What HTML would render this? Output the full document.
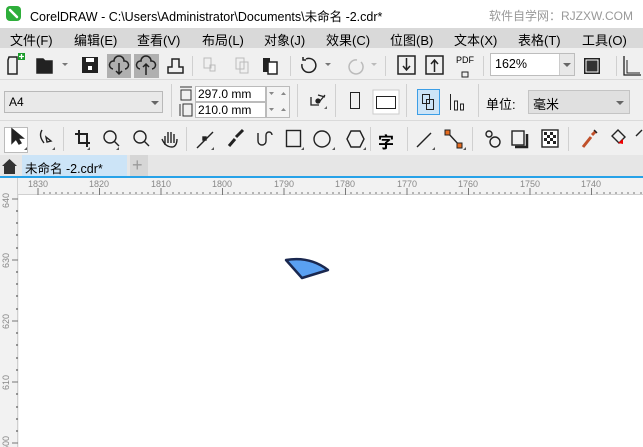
<!DOCTYPE html>
<html><head><meta charset="utf-8"><style>
*{margin:0;padding:0;box-sizing:border-box}
body{width:643px;height:447px;overflow:hidden;background:#f0f0f0;font-family:"Liberation Sans","Noto Sans CJK SC",sans-serif;position:relative}
.a{position:absolute}
.t{font-size:12px;color:#000;white-space:nowrap}
.ic{position:absolute}
svg{position:absolute;overflow:visible}
.sep{position:absolute;width:1px;background:#d0d0d0}
</style></head><body>
<!-- title -->
<div class="a" style="left:0;top:0;width:643px;height:28px;background:#fff"></div>
<div class="a" style="left:6px;top:6px;width:15px;height:15px;border-radius:4px;background:#2eae3a"></div>
<svg style="left:6px;top:6px" width="15" height="15"><path d="M4 4L11 11" stroke="#fff" stroke-width="2.5" stroke-linecap="round"/></svg>
<div class="a t" style="left:30px;top:6px;font-size:12.5px">CorelDRAW - C:\Users\Administrator\Documents\未命名 -2.cdr*</div>
<div class="a t" style="left:489px;top:7px;color:#999;font-size:12px">软件自学网：RJZXW.COM</div>
<!-- menu -->
<div class="a" style="left:0;top:28px;width:643px;height:20px;background:#d9d9d9"></div>
<div class="a t" style="left:10px;top:30px;font-size:13px">文件(F)</div>
<div class="a t" style="left:74px;top:30px;font-size:13px">编辑(E)</div>
<div class="a t" style="left:137px;top:30px;font-size:13px">查看(V)</div>
<div class="a t" style="left:202px;top:30px;font-size:13px">布局(L)</div>
<div class="a t" style="left:264px;top:30px;font-size:13px">对象(J)</div>
<div class="a t" style="left:326px;top:30px;font-size:13px">效果(C)</div>
<div class="a t" style="left:390px;top:30px;font-size:13px">位图(B)</div>
<div class="a t" style="left:454px;top:30px;font-size:13px">文本(X)</div>
<div class="a t" style="left:518px;top:30px;font-size:13px">表格(T)</div>
<div class="a t" style="left:582px;top:30px;font-size:13px">工具(O)</div>
<!-- toolbar1 -->
<div class="a" style="left:0;top:79px;width:643px;height:1px;background:#dadada"></div>
<svg style="left:0;top:48px" width="643" height="32" fill="none" stroke="#222" stroke-width="1.5">
<path d="M9 9h8v17H8V12z"/><rect x="18" y="5" width="7" height="7" fill="#1a9c2a" stroke="none"/><path d="M21.5 6v5M19 8.5h5" stroke="#fff" stroke-width="1.3"/>
<path d="M37 11h6l2 2h7v12H37z" fill="#222"/><path d="M62 15l3 3 3-3z" fill="#777" stroke="none"/>
<rect x="82" y="9" width="16" height="16" fill="#222" stroke="none"/><rect x="86" y="10" width="8" height="4" fill="#fff" stroke="none"/><rect x="88" y="18" width="4" height="4" fill="#fff" stroke="none"/>
<rect x="107" y="6" width="24" height="24" fill="#b0b0b0" stroke="none"/><rect x="134" y="6" width="25" height="24" fill="#b0b0b0" stroke="none"/>
<path d="M113 21a4 4 0 0 1 1-8 5 5 0 0 1 10 0 4 4 0 0 1 1 8M119 15v11M116 23l3 3 3-3"/>
<path d="M140 21a4 4 0 0 1 1-8 5 5 0 0 1 10 0 4 4 0 0 1 1 8M146 27v-11M143 19l3-3 3 3"/>
<path d="M168 25h15v-6h-4v-8h-7v8h-4z"/>
<g stroke="#bbb" stroke-width="1"><rect x="204" y="10" width="7" height="10"/><rect x="210" y="17" width="5" height="6"/><rect x="236" y="10" width="8" height="11"/><rect x="240" y="14" width="8" height="11"/></g>
<rect x="263" y="10" width="7" height="14" fill="#222" stroke="none"/><rect x="268" y="14" width="9" height="12" fill="#fff" stroke="#222"/>
<path d="M302 16a7 7 0 1 0 4-5M303 9v3h3"/><path d="M325 15l3 3 3-3z" fill="#777" stroke="none"/>
<path d="M357 12a7 7 0 1 0 4 2" stroke="#bbb"/><path d="M371 15l3 3 3-3z" fill="#bbb" stroke="none"/>
<rect x="398" y="8" width="17" height="18"/><path d="M406.5 10v12M403 18l3.5 4 3.5-4"/>
<rect x="426" y="8" width="17" height="18"/><path d="M434.5 24v-12M431 16l3.5-4 3.5 4"/>
<rect x="462" y="24" width="6" height="5" stroke-width="1"/>
<rect x="584" y="10" width="16" height="16" fill="#222" stroke="none"/><rect x="586" y="12" width="12" height="12" fill="#333" stroke="#fff" stroke-width="1"/>
<path d="M624 8v19h17" stroke-width="1.3"/><path d="M627 12v13h13" stroke-width="1"/>
</svg>
<div class="a t" style="left:456px;top:55px;font-size:9px">PDF</div>
<div class="sep" style="left:192px;top:56px;height:20px"></div>
<div class="sep" style="left:290px;top:56px;height:20px"></div>
<div class="sep" style="left:385px;top:56px;height:20px"></div>
<div class="sep" style="left:483px;top:56px;height:20px"></div>
<div class="sep" style="left:616px;top:56px;height:20px"></div>
<div class="a" style="left:490px;top:53px;width:85px;height:23px;background:#fff;border:1px solid #bdbdbd"></div>
<div class="a" style="left:559px;top:54px;width:15px;height:21px;background:#e8e8e8;border-left:1px solid #ccc"></div>
<svg style="left:562px;top:62px" width="10" height="6"><path d="M1 1h8L5 5z" fill="#666"/></svg>
<div class="a t" style="left:495px;top:57px;font-size:12.5px">162%</div>
<!-- toolbar2 -->
<div class="a" style="left:0;top:120px;width:643px;height:1px;background:#dadada"></div>
<div class="a" style="left:4px;top:91px;width:159px;height:22px;background:#e9e9e9;border:1px solid #b9b9b9"></div>
<div class="a t" style="left:9px;top:95px">A4</div>
<svg style="left:150px;top:100px" width="10" height="6"><path d="M1 1h8L5 5z" fill="#666"/></svg>
<div class="sep" style="left:171px;top:84px;height:33px"></div>
<svg style="left:178px;top:86px" width="16" height="32" fill="none" stroke="#333"><path d="M2 1h12M3 4h10v10H3zM2 18v12M5 18h9v12H5z"/></svg>
<div class="a" style="left:195px;top:86px;width:71px;height:16px;background:#fff;border:1px solid #bbb"></div>
<div class="a" style="left:195px;top:102px;width:71px;height:16px;background:#fff;border:1px solid #bbb"></div>
<div class="a" style="left:266px;top:86px;width:24px;height:32px;background:#f4f4f4;border:1px solid #bbb"></div>
<div class="a t" style="left:198px;top:87px;font-size:12px">297.0 mm</div>
<div class="a t" style="left:198px;top:103px;font-size:12px">210.0 mm</div>
<svg style="left:268px;top:90px" width="20" height="25" fill="#888"><path d="M1 2h5L3.5 5zM13 5h5l-2.5-3zM1 18h5l-2.5 3zM13 21h5l-2.5-3z"/></svg>
<div class="sep" style="left:297px;top:84px;height:33px"></div>
<svg style="left:308px;top:92px" width="20" height="20" fill="none" stroke="#222" stroke-width="1.3"><path d="M3 5v8h8M10 3l7 2M17 3l-5 6"/><circle cx="10" cy="9" r="2" fill="#222"/><path d="M16 17l3-3v3z" fill="#666" stroke="none"/></svg>
<div class="sep" style="left:335px;top:84px;height:33px"></div>
<svg style="left:345px;top:90px" width="60" height="24" fill="none" stroke="#222"><rect x="5.5" y="2.5" width="9" height="16"/><rect x="28" y="0" width="26" height="24" fill="#fff" stroke="#ccc"/><rect x="31.5" y="6.5" width="19" height="12"/></svg>
<div class="sep" style="left:406px;top:84px;height:33px"></div>
<div class="a" style="left:417px;top:89px;width:23px;height:26px;background:#cce4f7;border:1px solid #3c9ee6"></div>
<svg style="left:420px;top:93px" width="50" height="20" fill="none" stroke="#222"><rect x="2.5" y="1.5" width="7" height="9"/><rect x="6.5" y="6.5" width="7" height="10"/><path d="M30.5 1v16M34.5 8h3v9h-3zM40.5 11h3v6h-3z"/></svg>
<div class="sep" style="left:478px;top:84px;height:33px"></div>
<div class="a t" style="left:486px;top:94px;font-size:13px">单位:</div>
<div class="a" style="left:528px;top:90px;width:102px;height:24px;background:#e0e0e0;border:1px solid #c4c4c4"></div>
<div class="a t" style="left:533px;top:94px;font-size:13px">毫米</div>
<svg style="left:615px;top:100px" width="10" height="6"><path d="M1 1h8L5 5z" fill="#666"/></svg>
<!-- toolbar3 -->
<div class="a" style="left:4px;top:127px;width:24px;height:26px;background:#fff;border:1px solid #bbb"></div>
<svg style="left:0;top:121px" width="643" height="34" fill="none" stroke="#222" stroke-width="1.4">
<path d="M12 8v14l4-4 3 5 2-1-3-5h5z" fill="#222"/><path d="M24 29l3-3v3z" fill="#555" stroke="none"/>
<path d="M42 9c-3 5-1 9 2 13M46 16l5 4-4 1z" fill="none"/><path d="M52 29l3-3v3z" fill="#555" stroke="none"/>
<g stroke-width="2"><path d="M79 9v13h11M75 13h12v13"/></g><path d="M87 29l3-3v3z" fill="#555" stroke="none"/>
<circle cx="110" cy="16" r="6"/><path d="M114 20l5 5"/><path d="M116 29l3-3v3z" fill="#555" stroke="none"/>
<circle cx="140" cy="16" r="6"/><path d="M144 20l5 5"/>
<path d="M165 24v-9M168 22v-11M171 22v-11M174 22v-9M162 18c2 5 5 8 10 8 3 0 5-3 5-8"/>
<path d="M197 27l16-16"/><rect x="203" y="16" width="3" height="3" fill="#222"/><path d="M211 29l3-3v3z" fill="#555" stroke="none"/>
<path d="M229 25l6-7M236 16l7-7" stroke-width="3"/>
<path d="M258 12v8a4 4 0 0 0 8 0v-6a3 3 0 0 1 6 0"/>
<rect x="286.5" y="9.5" width="14" height="16"/><path d="M301 29l3-3v3z" fill="#555" stroke="none"/>
<circle cx="322" cy="18" r="8"/><path d="M332 29l3-3v3z" fill="#555" stroke="none"/>
<path d="M347 18l4-8h9l4 8-4 8h-9z"/><path d="M363 29l3-3v3z" fill="#555" stroke="none"/>
<path d="M417 26l14-14"/><path d="M432 29l3-3v3z" fill="#555" stroke="none"/>
<path d="M448 12l12 13"/><rect x="445" y="9" width="5" height="5" fill="#e56b1f" stroke="#222" stroke-width="1"/><rect x="457" y="22" width="5" height="5" fill="#e56b1f" stroke="#222" stroke-width="1"/><path d="M463 29l3-3v3z" fill="#555" stroke="none"/>
<circle cx="489" cy="13" r="3"/><circle cx="495" cy="21" r="5"/>
<rect x="512" y="10" width="12" height="14"/><path d="M515 26h12V13" stroke-width="2.5"/>
<rect x="542" y="9" width="16" height="17" fill="#fff"/><path d="M544 11h3v3h-3zM550 11h3v3h-3zM547 14h3v3h-3zM553 14h3v3h-3zM544 17h3v3h-3zM550 17h3v3h-3zM547 20h3v3h-3zM553 20h3v3h-3z" fill="#222" stroke="none"/>
<path d="M583 26l8-10M592 14l4-4" stroke-width="3" stroke="#c0502a"/><path d="M594 9l3 3" stroke="#222"/>
<path d="M612 15l6-6 7 7-6 6z"/><path d="M618 22l5-4v5z" fill="#e00" stroke="none"/>
<path d="M636 15l6-6"/>
</svg>
<div class="a t" style="left:378px;top:129px;font-size:16px;font-weight:bold">字</div>
<div class="sep" style="left:63px;top:127px;height:24px"></div>
<div class="sep" style="left:186px;top:127px;height:24px"></div>
<div class="sep" style="left:370px;top:127px;height:24px"></div>
<div class="sep" style="left:407px;top:127px;height:24px"></div>
<div class="sep" style="left:472px;top:127px;height:24px"></div>
<div class="sep" style="left:568px;top:127px;height:24px"></div>
<!-- tabs -->
<div class="a" style="left:0;top:155px;width:643px;height:22px;background:#e6e6e6"></div>
<svg style="left:1px;top:158px" width="18" height="17"><path d="M1 8L8.5 1 16 8h-2v8H3V8z" fill="#333"/></svg>
<div class="a" style="left:22px;top:155px;width:105px;height:21px;background:#cce4f7"></div>
<div class="a t" style="left:25px;top:158px;font-size:12.5px">未命名 -2.cdr*</div>
<div class="a" style="left:130px;top:155px;width:18px;height:21px;background:#d6d6d6"></div>
<div class="a t" style="left:132px;top:155px;font-size:18px;color:#9a9a9a">+</div>
<div class="a" style="left:0;top:176px;width:643px;height:2px;background:#27a2e8"></div>
<!-- rulers -->
<div class="a" style="left:0;top:178px;width:643px;height:17px;background:#f2f2f2;border-bottom:1px solid #d0d0d0"></div>
<div class="a" style="left:0;top:178px;width:18px;height:269px;background:#f2f2f2;border-right:1px solid #d0d0d0"></div>
<div class="a" style="left:19px;top:195px;width:624px;height:252px;background:#fff"></div>
<svg style="left:0;top:178px" width="643" height="269" stroke="#777" stroke-width="1" fill="#888" font-family="Liberation Sans" font-size="9">
<g id="h">
<path d="M38 10v7M99.5 10v7M161 10v7M222.5 10v7M284 10v7M345.5 10v7M407 10v7M468.5 10v7M530 10v7M591.5 10v7M653 10v7"/>
<path d="M44 14v2M50 14v2M56 14v2M62 14v2M68 14v2M75 14v2M81 14v2M87 14v2M93 14v2M105 14v2M111 14v2M117 14v2M123 14v2M130 14v2M136 14v2M142 14v2M148 14v2M154 14v2M167 14v2M173 14v2M179 14v2M185 14v2M191 14v2M197 14v2M203 14v2M210 14v2M216 14v2M228 14v2M234 14v2M240 14v2M246 14v2M253 14v2M259 14v2M265 14v2M271 14v2M277 14v2M290 14v2M296 14v2M302 14v2M308 14v2M314 14v2M320 14v2M327 14v2M333 14v2M339 14v2M351 14v2M357 14v2M363 14v2M370 14v2M376 14v2M382 14v2M388 14v2M394 14v2M400 14v2M413 14v2M419 14v2M425 14v2M431 14v2M437 14v2M444 14v2M450 14v2M456 14v2M462 14v2M474 14v2M480 14v2M487 14v2M493 14v2M499 14v2M505 14v2M511 14v2M517 14v2M524 14v2M536 14v2M542 14v2M548 14v2M554 14v2M561 14v2M567 14v2M573 14v2M579 14v2M585 14v2M597 14v2M604 14v2M610 14v2M616 14v2M622 14v2M628 14v2M634 14v2M641 14v2"/>
</g>
<g stroke="none"><text x="28" y="9">1830</text><text x="89" y="9">1820</text><text x="151" y="9">1810</text><text x="212" y="9">1800</text><text x="274" y="9">1790</text><text x="335" y="9">1780</text><text x="397" y="9">1770</text><text x="458" y="9">1760</text><text x="520" y="9">1750</text><text x="581" y="9">1740</text></g>
<path d="M12 21h6M12 82h6M12 143h6M12 204h6M12 265h6"/>
<path d="M16 33h2M16 45h2M16 57h2M16 70h2M16 94h2M16 106h2M16 118h2M16 131h2M16 155h2M16 167h2M16 180h2M16 192h2M16 216h2M16 229h2M16 241h2M16 253h2" stroke-width="1.5"/>
<g stroke="none"><text transform="translate(9,30) rotate(-90)">640</text><text transform="translate(9,90) rotate(-90)">630</text><text transform="translate(9,151) rotate(-90)">620</text><text transform="translate(9,212) rotate(-90)">610</text><text transform="translate(9,273) rotate(-90)">600</text></g>
</svg>
<!-- shape -->
<svg style="left:0;top:0" width="643" height="447"><path d="M286 260Q310 256 328 270L302 278Z" fill="#5aa0f2" stroke="#1a2850" stroke-width="2.5" stroke-linejoin="round"/></svg>
</body></html>
